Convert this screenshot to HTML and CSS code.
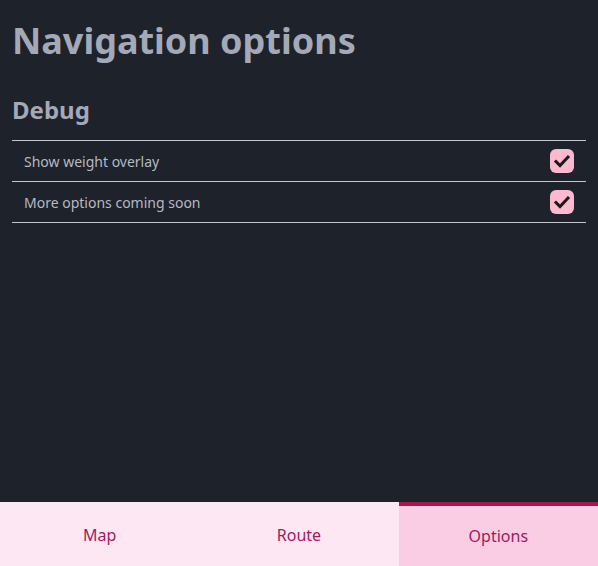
FILE: index.html
```html
<!DOCTYPE html>
<html lang="en">
<head>
<meta charset="utf-8">
<title>Navigation options</title>
<link rel="stylesheet" href="styles.css">
</head>
<body>
<div class="app">
  <main class="content">
    <h1 class="title">Navigation options</h1>
    <h2 class="section">Debug</h2>
    <ul class="options">
      <li class="option">
        <span class="label">Show weight overlay</span>
        <span class="check"><svg viewBox="0 0 24 24" width="24" height="24"><path d="M6 12.5l4 4 8-8.5" fill="none" stroke="#1a1a1a" stroke-width="3" stroke-linecap="square"/></svg></span>
      </li>
      <li class="option">
        <span class="label">More options coming soon</span>
        <span class="check"><svg viewBox="0 0 24 24" width="24" height="24"><path d="M6 12.5l4 4 8-8.5" fill="none" stroke="#1a1a1a" stroke-width="3" stroke-linecap="square"/></svg></span>
      </li>
    </ul>
  </main>
  <nav class="tabs">
    <div class="tab">Map</div>
    <div class="tab">Route</div>
    <div class="tab active">Options</div>
  </nav>
</div>
</body>
</html>
```
FILE: styles.css
```css
html, body {
  margin: 0;
  padding: 0;
  height: 100%;
}
body {
  background: #1e222a;
  font-family: "Noto Sans", "Open Sans", sans-serif;
}
.app {
  display: flex;
  flex-direction: column;
  height: 100vh;
}
.content {
  flex: 1;
  padding: 16px 12px 0;
}
.title {
  margin: 0;
  font-size: 36px;
  font-weight: 700;
  line-height: 49px;
  color: #a3a9b6;
}
.section {
  margin: 28px 0 0;
  font-size: 24px;
  font-weight: 700;
  line-height: 33px;
  color: #a3a9b6;
}
.options {
  list-style: none;
  margin: 14px 0 0;
  padding: 0;
  border-top: 1px solid #c3c7ce;
}
.option {
  display: flex;
  align-items: center;
  justify-content: space-between;
  height: 40px;
  padding: 0 12px;
  border-bottom: 1px solid #c3c7ce;
}
.label {
  font-size: 14px;
  color: #b5bac3;
}
.check {
  width: 24px;
  height: 24px;
  border-radius: 6px;
  background: #fdb9cd;
  display: flex;
}
.tabs {
  display: grid;
  grid-template-columns: 1fr 1fr 1fr;
  height: 64px;
  background: #fde7f2;
}
.tab {
  display: flex;
  align-items: center;
  justify-content: center;
  padding-top: 2px;
  font-size: 16px;
  color: #a3195b;
}
.active {
  background: #fbcde4;
  border-top: 4px solid #a8164f;
  padding-top: 0;
}
```
